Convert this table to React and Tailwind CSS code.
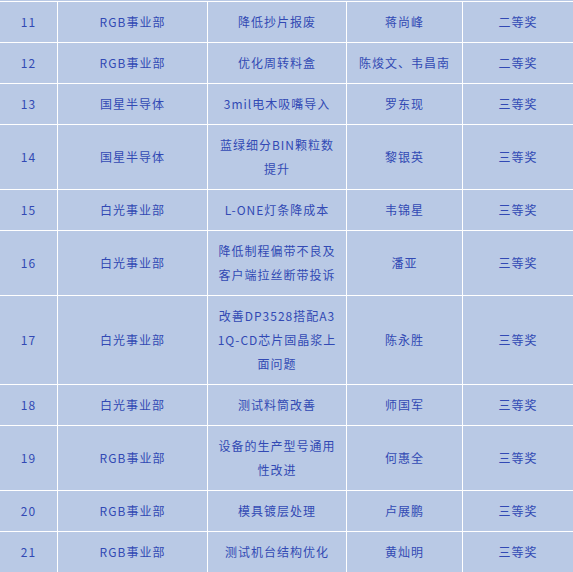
import React from "react";

const rows = [
  ["11", "RGB事业部", ["降低抄片报废"], "蒋尚峰", "二等奖"],
  ["12", "RGB事业部", ["优化周转料盒"], "陈焌文、韦昌南", "二等奖"],
  ["13", "国星半导体", ["3mil电木吸嘴导入"], "罗东现", "三等奖"],
  ["14", "国星半导体", ["蓝绿细分BIN颗粒数", "提升"], "黎银英", "三等奖"],
  ["15", "白光事业部", ["L-ONE灯条降成本"], "韦锦星", "三等奖"],
  ["16", "白光事业部", ["降低制程偏带不良及", "客户端拉丝断带投诉"], "潘亚", "三等奖"],
  ["17", "白光事业部", ["改善DP3528搭配A3", "1Q-CD芯片固晶浆上", "面问题"], "陈永胜", "三等奖"],
  ["18", "白光事业部", ["测试料筒改善"], "师国军", "三等奖"],
  ["19", "RGB事业部", ["设备的生产型号通用", "性改进"], "何惠全", "三等奖"],
  ["20", "RGB事业部", ["模具镀层处理"], "卢展鹏", "三等奖"],
  ["21", "RGB事业部", ["测试机台结构优化"], "黄灿明", "三等奖"],
];

const Cell = ({ children }) => (
  <div className="bg-[#b9c9e5] flex flex-col items-center justify-center text-center py-2">
    {children}
  </div>
);

export default function App() {
  return (
    <div
      className="w-[573px] h-[572px] overflow-hidden bg-[#b9c9e5] pt-px text-[#3249b4] text-[12px] leading-[24px] tracking-[1px]"
      style={{ fontFamily: '"Noto Sans CJK SC", "Noto Sans", sans-serif' }}
    >
      <div className="grid grid-cols-[57px_149px_138px_115px_110px] gap-px bg-white pt-px">
        {rows.map(([no, dept, title, name, prize]) => (
          <React.Fragment key={no}>
            <Cell>{no}</Cell>
            <Cell>{dept}</Cell>
            <Cell>
              {title.map((t) => (
                <span key={t}>{t}</span>
              ))}
            </Cell>
            <Cell>{name}</Cell>
            <Cell>{prize}</Cell>
          </React.Fragment>
        ))}
      </div>
    </div>
  );
}
